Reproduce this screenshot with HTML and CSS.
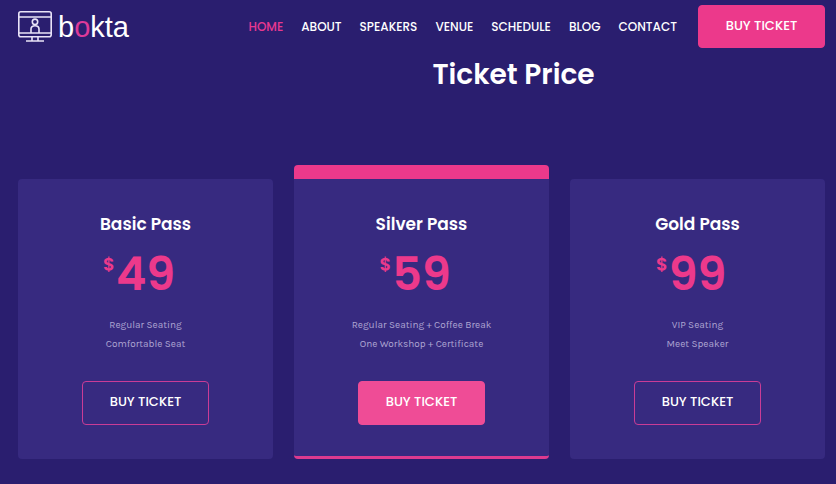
FILE: index.html
```html
<!DOCTYPE html>
<html lang="en">
<head>
  <meta charset="UTF-8" />
  <meta name="viewport" content="width=device-width, initial-scale=1.0"/>
  <title>Bokta - Ticket Price</title>
  <link rel="stylesheet" href="styles.css">
</head>
<body>
  <header class="header">
    <a class="logo" href="#">
      <svg class="logo-icon" viewBox="0 0 34 32" fill="none" stroke="#e9e4f8" stroke-width="1.6" aria-hidden="true">
        <rect x="0.8" y="0.8" width="32.4" height="25" rx="2" />
        <path d="M1 6h32M1 22h32M14 26v3.5M20 26v3.5M8 30h18" />
        <circle cx="17" cy="10.8" r="2.7" />
        <path d="M13 22v-4c0-2 1.5-3.3 4-3.3s4 1.3 4 3.3v4" />
      </svg>
      <span class="logo-text">b<span class="pink">o</span>kta</span>
    </a>
    <nav class="nav">
      <a class="active" href="#">HOME</a>
      <a href="#">ABOUT</a>
      <a href="#">SPEAKERS</a>
      <a href="#">VENUE</a>
      <a href="#">SCHEDULE</a>
      <a href="#">BLOG</a>
      <a href="#">CONTACT</a>
    </nav>
    <button type="button" class="btn btn-pink">BUY TICKET</button>
  </header>

  <main>
    <h1 class="page-title">Ticket Price</h1>

    <section class="tickets">
      <article class="card">
        <h2>Basic Pass</h2>
        <p class="price"><span class="currency">$</span><span>49</span></p>
        <ul>
          <li>Regular Seating</li>
          <li>Comfortable Seat</li>
        </ul>
        <button type="button" class="btn">BUY TICKET</button>
      </article>
      <article class="card featured">
        <h2>Silver Pass</h2>
        <p class="price"><span class="currency">$</span><span>59</span></p>
        <ul>
          <li>Regular Seating + Coffee Break</li>
          <li>One Workshop + Certificate</li>
        </ul>
        <button type="button" class="btn btn-light">BUY TICKET</button>
      </article>
      <article class="card">
        <h2>Gold Pass</h2>
        <p class="price"><span class="currency">$</span><span>99</span></p>
        <ul>
          <li>VIP Seating</li>
          <li>Meet Speaker</li>
        </ul>
        <button type="button" class="btn">BUY TICKET</button>
      </article>
    </section>
  </main>
</body>
</html>
```

FILE: styles.css
```css
* {
  box-sizing: border-box;
}
body {
  margin: 0;
  padding: 5px 11px 24px 18px;
  background: #2a1e6f;
  color: white;
  font-family: Poppins, Inter, sans-serif;
}
a {
  color: white;
  text-decoration: none;
}
.header {
  display: flex;
  align-items: center;
}
.logo {
  display: flex;
  align-items: center;
  gap: 6px;
  margin-right: auto;
}
.logo-icon {
  width: 34px;
  height: 32px;
}
.logo-text {
  font-family: "Liberation Sans", Arial, sans-serif;
  font-size: 29px;
  line-height: 32px;
}
.pink {
  color: #dd3a9a;
}
.nav {
  display: flex;
  gap: 18px;
  margin-right: 21px;
  font-size: 12px;
  font-weight: 500;
}
.nav .active {
  color: #e8388f;
}
.btn {
  width: 127px;
  height: 44px;
  padding: 0 0 2px;
  border: 1px solid #c93c96;
  border-radius: 4px;
  background: transparent;
  color: white;
  font-family: inherit;
  font-size: 13px;
  font-weight: 500;
  cursor: pointer;
}
.btn-pink {
  height: 43px;
  background: #ec398b;
  border-color: #ec398b;
}
.btn-light {
  background: #ef4c96;
  border-color: #ef4c96;
}
.page-title {
  margin: 10px 0 0;
  padding-left: 184px;
  font-size: 28px;
  font-weight: 600;
  line-height: 34px;
  text-align: center;
}
.tickets {
  display: grid;
  grid-template-columns: repeat(3, 1fr);
  gap: 21px;
  margin-top: 73px;
}
.card {
  display: flex;
  flex-direction: column;
  align-items: center;
  margin-top: 14px;
  padding: 32px 10px 34px;
  border-radius: 4px;
  background: #372a80;
}
.card.featured {
  margin-top: 0;
  border-top: 14px solid #ec398b;
  border-bottom: 3px solid #dd3a8f;
  padding-bottom: 31px;
}
.card h2 {
  margin: 0;
  font-size: 17px;
  font-weight: 600;
  line-height: 26px;
}
.price {
  display: grid;
  grid-template-columns: 1fr auto 1fr;
  align-self: stretch;
  margin: 9px 0 14px;
  color: #ec398b;
  font-size: 46px;
  font-weight: 600;
  line-height: 56px;
}
.currency {
  justify-self: end;
  padding-right: 1px;
  font-size: 18px;
  line-height: 36px;
}
.card ul {
  margin: 0 0 27px;
  padding: 0;
  list-style: none;
  color: #aea5d2;
  font-family: Karla, Roboto, sans-serif;
  font-size: 10px;
  line-height: 19px;
  text-align: center;
}
```
